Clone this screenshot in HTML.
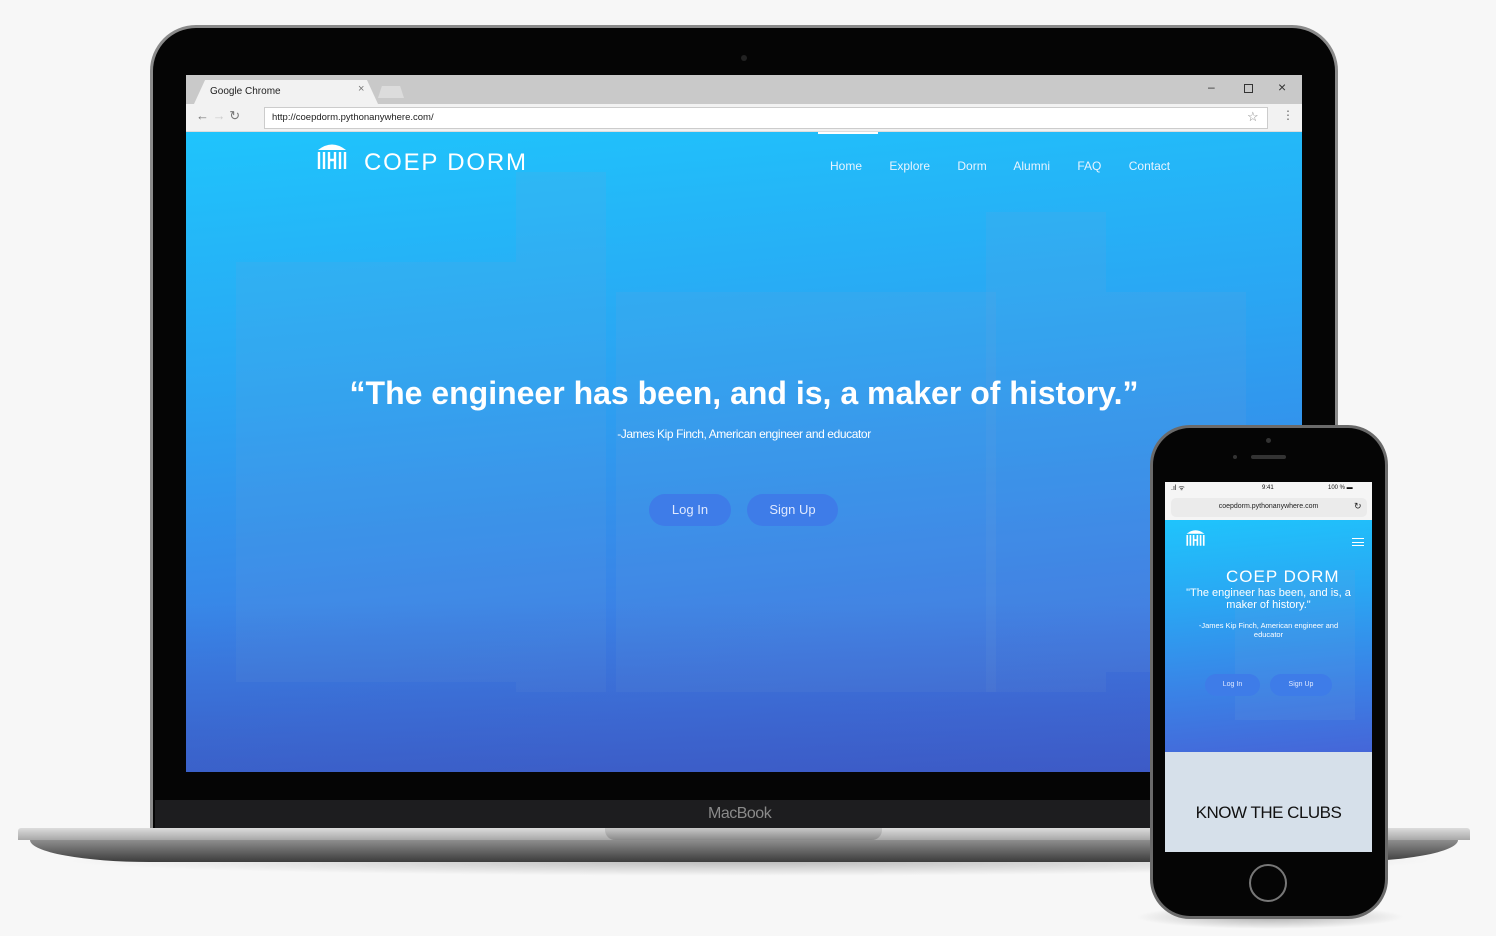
<!DOCTYPE html>
<html><head><meta charset="utf-8"><style>
*{margin:0;padding:0;box-sizing:border-box}
body{width:1496px;height:936px;background:#f7f7f7;position:relative;overflow:hidden;font-family:"Liberation Sans",sans-serif}
.a{position:absolute}
.hero{background:linear-gradient(175deg,#1fc4fc 0%,#2aa6f3 35%,#3a82e6 70%,#4566d8 100%)}
.bld{background:rgba(110,160,220,.14)}
.t{color:#fff;white-space:nowrap}
</style></head><body>
<div class="a" style="left:60px;top:846px;width:1380px;height:30px;border-radius:50%;background:radial-gradient(ellipse at center,rgba(0,0,0,.25),rgba(0,0,0,0) 70%)"></div>
<div class="a" style="left:150px;top:25px;width:1188px;height:810px;border-radius:46px 46px 0 0;background:#8a8a8a;padding:3px">
 <div style="width:100%;height:100%;border-radius:43px 43px 0 0;background:#050505"></div>
</div>
<div class="a" style="left:741px;top:55px;width:6px;height:6px;border-radius:50%;background:#222"></div>
<div class="a" style="left:155px;top:800px;width:1178px;height:30px;background:#1d1d1f"></div>
<div class="a t" style="left:708px;top:805px;font-size:16px;color:#8a8a8a;letter-spacing:-.5px">MacBook</div>
<div class="a" style="left:186px;top:75px;width:1116px;height:697px;overflow:hidden;background:#fff">
 <div class="a" style="left:0;top:0;width:1116px;height:29px;background:#c9c9c9"></div>
 <div class="a" style="left:8px;top:5px;width:184px;height:24px;background:#f2f2f2;clip-path:polygon(6% 0,94% 0,100% 100%,0 100%)"></div>
 <div class="a t" style="left:24px;top:11px;font-size:10px;color:#222">Google Chrome</div>
 <div class="a t" style="left:172px;top:8px;font-size:11px;color:#777">×</div>
 <div class="a" style="left:192px;top:11px;width:26px;height:12px;background:#dcdcdc;clip-path:polygon(15% 0,85% 0,100% 100%,0 100%)"></div>
 <div class="a t" style="left:1022px;top:5px;font-size:12px;color:#333">–</div>
 <div class="a" style="left:1058px;top:9px;width:9px;height:9px;border:1.5px solid #333"></div>
 <div class="a t" style="left:1092px;top:4px;font-size:14px;color:#333">×</div>
 <div class="a" style="left:0;top:29px;width:1116px;height:28px;background:#f2f2f2;border-bottom:1px solid #ddd"></div>
 <div class="a t" style="left:10px;top:33px;font-size:13px;color:#777">← <span style="color:#ccc">→</span> ↻</div>
 <div class="a" style="left:78px;top:32px;width:1004px;height:22px;background:#fff;border:1px solid #ccc"></div>
 <div class="a t" style="left:86px;top:37px;font-size:9.5px;color:#222">http://coepdorm.pythonanywhere.com/</div>
 <div class="a t" style="left:1061px;top:34px;font-size:13px;color:#888">☆</div>
 <div class="a t" style="left:1096px;top:33px;font-size:12px;color:#666">⋮</div>
 <div class="a hero" style="left:0;top:57px;width:1116px;height:640px;overflow:hidden">
  <div class="a bld" style="left:50px;top:130px;width:280px;height:420px"></div>
  <div class="a bld" style="left:330px;top:40px;width:90px;height:520px"></div>
  <div class="a bld" style="left:430px;top:160px;width:380px;height:400px"></div>
  <div class="a bld" style="left:800px;top:80px;width:120px;height:480px"></div>
  <div class="a bld" style="left:920px;top:160px;width:140px;height:380px"></div>
  <div class="a" style="left:0;top:470px;width:1116px;height:170px;background:linear-gradient(180deg,rgba(60,80,190,0),rgba(50,70,170,.4))"></div>
  <div class="a" style="left:632px;top:0;width:60px;height:2px;background:#fff"></div>
 </div>
 <svg class="a" style="left:130px;top:66px" width="32" height="30" viewBox="0 0 32 30"><path d="M2 9 Q16 -2 30 9Z" fill="#fff"/><g stroke="#fff" stroke-width="2.4"><path d="M3 11V28M8 11V28M13 11V28M13 19H19M19 11V28M24 11V28M29 11V28"/></g></svg>
 <div class="a t" style="left:178px;top:74px;font-size:24px;letter-spacing:1.8px">COEP DORM</div>
 <div class="a t" style="left:644px;top:84px;font-size:12px;word-spacing:24px;color:#e8f4ff">Home Explore Dorm Alumni FAQ Contact</div>
 <div class="a t" style="left:0;width:1116px;text-align:center;top:300px;font-size:32px;font-weight:bold;letter-spacing:0">“The engineer has been, and is, a maker of history.”</div>
 <div class="a t" style="left:0;width:1116px;text-align:center;top:352px;font-size:12px;letter-spacing:-.4px">-James Kip Finch, American engineer and educator</div>
 <div class="a t" style="left:463px;top:419px;width:82px;height:32px;border-radius:16px;background:#3e7ce8;text-align:center;line-height:32px;font-size:13px;color:#dfe9ff">Log In</div>
 <div class="a t" style="left:561px;top:419px;width:91px;height:32px;border-radius:16px;background:#3e7ce8;text-align:center;line-height:32px;font-size:13px;color:#dfe9ff">Sign Up</div>
</div>
<div class="a" style="left:18px;top:828px;width:1452px;height:12px;background:linear-gradient(#dcdcdc,#a8a8a8);border-radius:3px 3px 0 0"></div>
<div class="a" style="left:30px;top:840px;width:1428px;height:22px;background:linear-gradient(#8e8e8e,#3c3c3c);border-radius:0 0 120px 120px/0 0 22px 22px"></div>
<div class="a" style="left:605px;top:828px;width:277px;height:12px;background:linear-gradient(#c8c8c8,#8a8a8a);border-radius:0 0 10px 10px"></div>
<div class="a" style="left:1135px;top:905px;width:270px;height:24px;border-radius:50%;background:radial-gradient(ellipse,rgba(0,0,0,.3),rgba(0,0,0,0) 70%)"></div>
<div class="a" style="left:1150px;top:425px;width:238px;height:494px;border-radius:40px;background:#6a6a6a;padding:3px">
 <div style="width:100%;height:100%;border-radius:37px;background:#050505"></div>
</div>
<div class="a" style="left:1266px;top:438px;width:5px;height:5px;border-radius:50%;background:#333"></div>
<div class="a" style="left:1251px;top:455px;width:35px;height:4px;border-radius:2px;background:#333"></div>
<div class="a" style="left:1233px;top:455px;width:4px;height:4px;border-radius:50%;background:#333"></div>
<div class="a" style="left:1249px;top:864px;width:38px;height:38px;border-radius:50%;border:2px solid #777"></div>
<div class="a" style="left:1165px;top:482px;width:207px;height:370px;background:#d6e0ea;overflow:hidden">
 <div class="a" style="left:0;top:0;width:207px;height:38px;background:#f5f5f5"></div>
 <div class="a t" style="left:6px;top:2px;font-size:7px;color:#111">.ıl ᯤ</div>
 <div class="a t" style="left:97px;top:3px;font-size:6px;color:#111">9:41</div>
 <div class="a t" style="left:163px;top:3px;font-size:6px;color:#111">100 % ▬</div>
 <div class="a" style="left:6px;top:16px;width:196px;height:19px;border-radius:5px;background:#ebebeb"></div>
 <div class="a t" style="left:0;width:207px;text-align:center;top:21px;font-size:7px;color:#222">coepdorm.pythonanywhere.com</div>
 <div class="a t" style="left:189px;top:19px;font-size:9px;color:#222">↻</div>
 <div class="a hero" style="left:0;top:38px;width:207px;height:232px"><div class="a bld" style="left:70px;top:50px;width:120px;height:150px"></div></div>
 <svg class="a" style="left:20px;top:46px" width="21" height="19" viewBox="0 0 32 30"><path d="M2 9 Q16 -2 30 9Z" fill="#fff"/><g stroke="#fff" stroke-width="2.6"><path d="M3 11V28M8 11V28M13 11V28M13 19H19M19 11V28M24 11V28M29 11V28"/></g></svg>
 <div class="a" style="left:187px;top:56px;width:12px;height:8px;border-top:1.5px solid #fff;border-bottom:1.5px solid #fff"></div>
 <div class="a" style="left:187px;top:59.5px;width:12px;height:1.5px;background:#fff"></div>
 <div class="a t" style="left:61px;top:85px;font-size:17px;letter-spacing:1px">COEP DORM</div>
 <div class="a t" style="left:0;width:207px;text-align:center;top:105px;font-size:11px;line-height:12px;white-space:normal;padding:0 12px;letter-spacing:0">"The engineer has been, and is, a maker of history."</div>
 <div class="a t" style="left:0;width:207px;text-align:center;top:140px;font-size:7.5px;line-height:8.5px;white-space:normal;padding:0 20px">-James Kip Finch, American engineer and educator</div>
 <div class="a t" style="left:40px;top:192px;width:55px;height:22px;border-radius:11px;background:#3e7ce8;text-align:center;line-height:22px;font-size:7px;color:#dfe9ff">Log In</div>
 <div class="a t" style="left:105px;top:192px;width:62px;height:22px;border-radius:11px;background:#3e7ce8;text-align:center;line-height:22px;font-size:7px;color:#dfe9ff">Sign Up</div>
 <div class="a t" style="left:0;width:207px;text-align:center;top:321px;font-size:17px;color:#111;letter-spacing:-.5px">KNOW THE CLUBS</div>
</div>
</body></html>
